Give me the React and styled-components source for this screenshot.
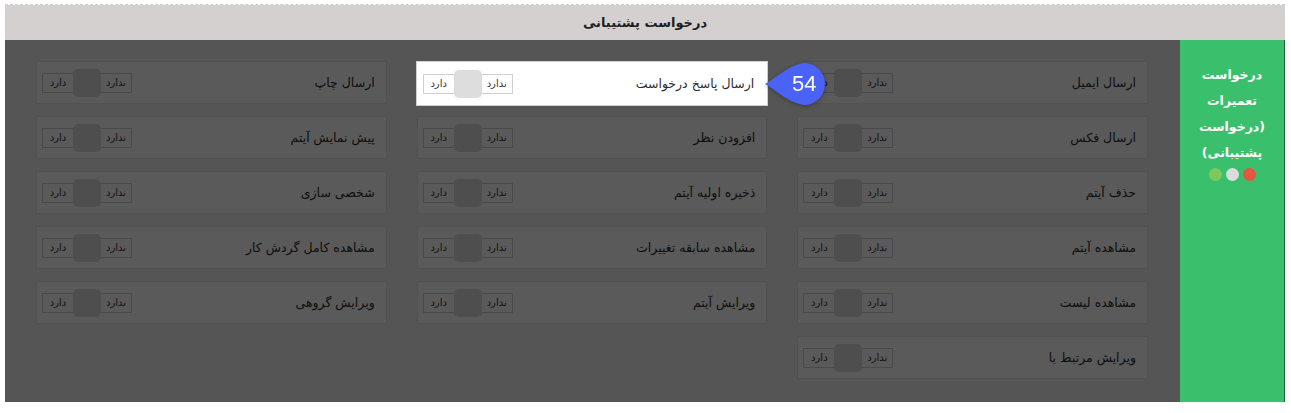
import React from "react";
import styled, { createGlobalStyle } from "styled-components";

const GlobalStyle = createGlobalStyle`
  html, body {
    margin: 0;
    padding: 0;
    background: #ffffff;
  }
  body {
    font-family: "DejaVu Sans", "Noto Sans", sans-serif;
  }
`;

const permissions = [
  { id: 1, title: "ارسال ایمیل" },
  { id: 2, title: "ارسال پاسخ درخواست", active: true },
  { id: 3, title: "ارسال چاپ" },
  { id: 4, title: "ارسال فکس" },
  { id: 5, title: "افزودن نظر" },
  { id: 6, title: "پیش نمایش آیتم" },
  { id: 7, title: "حذف آیتم" },
  { id: 8, title: "ذخیره اولیه آیتم" },
  { id: 9, title: "شخصی سازی" },
  { id: 10, title: "مشاهده آیتم" },
  { id: 11, title: "مشاهده سابقه تغییرات" },
  { id: 12, title: "مشاهده کامل گردش کار" },
  { id: 13, title: "مشاهده لیست" },
  { id: 14, title: "ویرایش آیتم" },
  { id: 15, title: "ویرایش گروهی" },
  { id: 16, title: "ویرایش مرتبط با" },
];

const Toggle = () => (
  <ToggleBox>
    <ToggleLabel>ندارد</ToggleLabel>
    <Knob />
    <ToggleLabel>دارد</ToggleLabel>
  </ToggleBox>
);

const Bubble = ({ value }) => (
  <BubbleWrap>
    <svg width="62" height="44" viewBox="0 0 62 44">
      <path
        d="M1 22 C 14 15, 24 3, 40 1 A 21 21 0 1 1 40 43 C 24 41, 14 29, 1 22 Z"
        fill="#4a62f5"
      />
    </svg>
    <BubbleText>{value}</BubbleText>
  </BubbleWrap>
);

const App = () => {
  return (
    <>
      <GlobalStyle />
      <Page dir="rtl">
        <Panel>
          <Header>درخواست پشتیبانی</Header>
          <Body>
            <Sidebar>
              <SideTitle>درخواست تعمیرات (درخواست پشتیبانی)</SideTitle>
              <Dots>
                <Dot color="#e8553f" />
                <Dot color="#dcdcdc" />
                <Dot color="#7cc95c" />
              </Dots>
            </Sidebar>
            <Content>
              <Overlay />
              {permissions.map((p) => (
                <Card key={p.id} $active={p.active}>
                  <CardTitle>{p.title}</CardTitle>
                  <Toggle />
                  {p.active && <Bubble value="54" />}
                </Card>
              ))}
            </Content>
          </Body>
        </Panel>
      </Page>
    </>
  );
};

export default App;

const Page = styled.div`
  padding: 4px 6px 10px 5px;
`;

const Panel = styled.div`
  border-top: 1px dashed #cfcfcf;
`;

const Header = styled.div`
  height: 35px;
  background: #d5d0d0;
  display: flex;
  align-items: center;
  justify-content: center;
  font-size: 13px;
  font-weight: bold;
  color: #1e1e1e;
`;

const Body = styled.div`
  display: flex;
  height: 362px;
`;

const Sidebar = styled.div`
  width: 105px;
  background: #3abf6c;
  border-right: 1px solid #245f3a;
  display: flex;
  flex-direction: column;
  align-items: center;
  padding-top: 22px;
  box-sizing: border-box;
`;

const SideTitle = styled.div`
  width: 80px;
  color: #ffffff;
  font-size: 12.5px;
  font-weight: bold;
  line-height: 26px;
  text-align: center;
`;

const Dots = styled.div`
  display: flex;
  gap: 4px;
  margin-top: 2px;
`;

const Dot = styled.span`
  width: 13px;
  height: 13px;
  border-radius: 50%;
  background: ${(p) => p.color};
`;

const Content = styled.div`
  position: relative;
  flex: 1;
  background: #f1f1f1;
  padding: 21px 32px 22px 31px;
  display: grid;
  grid-template-columns: repeat(3, 1fr);
  grid-auto-rows: 43px;
  column-gap: 30px;
  row-gap: 12px;
  align-content: start;
`;

const Overlay = styled.div`
  position: absolute;
  inset: 0;
  background: rgba(0, 0, 0, 0.647);
  z-index: 1;
`;

const Card = styled.div`
  position: relative;
  display: flex;
  align-items: center;
  justify-content: space-between;
  background: #ffffff;
  border: 1px solid #e6e6e6;
  padding: 0 11px 0 5px;
  box-sizing: border-box;
  ${(p) =>
    p.$active &&
    `
    z-index: 2;
    margin: 0 -1px -2px -1px;
    border-color: #d0d0d0;
    padding-left: 6px;
    padding-right: 13px;
  `}
`;

const CardTitle = styled.span`
  font-size: 12.5px;
  color: #2c2c2c;
`;

const ToggleBox = styled.div`
  display: flex;
  align-items: center;
  height: 20px;
  width: 90px;
  border: 1px solid #cfcfcf;
  box-sizing: border-box;
`;

const ToggleLabel = styled.span`
  flex: 1;
  text-align: center;
  font-size: 10px;
  color: #333333;
`;

const Knob = styled.span`
  width: 28px;
  height: 28px;
  border-radius: 5px;
  background: #dddddd;
`;

const BubbleWrap = styled.div`
  position: absolute;
  left: calc(100% - 3px);
  top: 50%;
  transform: translateY(-50%);
  width: 62px;
  height: 44px;
  filter: drop-shadow(0 1px 2px rgba(0, 0, 0, 0.3));
`;

const BubbleText = styled.span`
  position: absolute;
  left: 19px;
  width: 42px;
  top: 0;
  height: 44px;
  display: flex;
  align-items: center;
  justify-content: center;
  color: #ffffff;
  font-family: "Liberation Sans", Arial, sans-serif;
  font-size: 22px;
  direction: ltr;
`;
